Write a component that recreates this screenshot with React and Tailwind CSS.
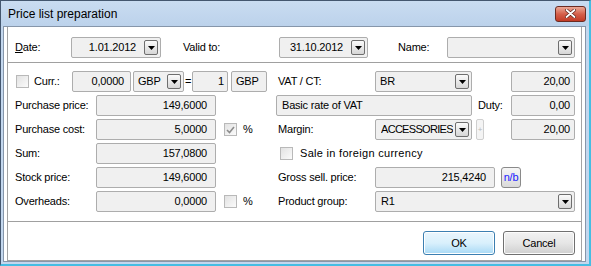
const DropBtn = ({ className = "" }) => (
  <span className={`flex h-[15px] w-[14px] shrink-0 items-center justify-center rounded-[2px] border border-[#6e6e6e] bg-linear-to-b from-[#fbfbfb] to-[#d6d6d6] ${className}`}>
    <svg width="7" height="4" viewBox="0 0 7 4">
      <path d="M0 0h7L3.5 4z" fill="#000" />
    </svg>
  </span>
);

const Field = ({ className = "", children }) => (
  <div className={`flex h-[21px] shrink-0 items-center rounded-[2px] border border-[#adadad] bg-[#f0f0f0] ${className}`}>
    {children}
  </div>
);

const Check = ({ checked, className = "" }) => (
  <span className={`flex h-[13px] w-[13px] shrink-0 items-center justify-center border border-[#b9b9b9] bg-linear-to-br from-[#e2e2e2] to-[#fbfbfb] ${className}`}>
    {checked && (
      <svg width="9" height="8" viewBox="0 0 9 8">
        <path d="M1 4l2.5 2.5L8 1" fill="none" stroke="#8c8c8c" strokeWidth="1.6" />
      </svg>
    )}
  </span>
);

const Row = ({ children }) => (
  <div className="flex h-[21px] items-center pl-[7px]">{children}</div>
);

const Left = ({ label, value, check, checked }) => (
  <div className="flex w-[263px] shrink-0 items-center">
    <span className="w-[81px]">{label}</span>
    <Field className="w-[120px] justify-end pr-[8px]">{value}</Field>
    {check && (
      <>
        <Check checked={checked} className="ml-[8px]" />
        <span className="ml-[6px]">%</span>
      </>
    )}
  </div>
);

export default function App() {
  return (
    <div className="flex h-[266px] w-[591px] flex-col border-l border-t border-[#44576f] border-r-2 border-b-2 border-r-[#45bde3] border-b-[#45bde3] bg-[#c3d7ee] font-['Liberation_Sans',Arial,sans-serif] text-[11px] leading-none tracking-[-0.2px] text-black">
      {/* title bar */}
      <div className="flex h-[25px] shrink-0 items-center bg-linear-to-b from-[#c9dcf1] to-[#bcd2eb] pl-[7px] pr-[3px]">
        <span className="text-[12px] tracking-normal">Price list preparation</span>
        <span className="ml-auto flex h-[16px] w-[31px] items-center justify-center rounded-[3px] border border-[#6b2b22] bg-linear-to-b from-[#eaa897] via-[#d5604b] to-[#c23a25]">
          <svg width="11" height="9" viewBox="0 0 11 9">
            <path d="M1.5 1l8 7M9.5 1l-8 7" stroke="#5a2018" strokeWidth="3.2" strokeLinecap="round" />
            <path d="M1.5 1l8 7M9.5 1l-8 7" stroke="#fff" strokeWidth="1.8" strokeLinecap="round" />
          </svg>
        </span>
      </div>

      {/* client */}
      <div className="ml-[2px] mr-[3px] mb-[2px] flex-1 border border-[#8696aa] bg-white">
        <div className="ml-[3px] mr-[3px] flex h-full flex-col border-l border-r border-b border-[#a3a3a3] pt-[10px]">
          {/* header row */}
          <Row>
            <span className="w-[56px]">
              <span className="underline">D</span>ate:
            </span>
            <Field className="w-[90px] justify-end pr-[2px]">
              <span>1.01.2012</span>
              <DropBtn className="ml-[8px]" />
            </Field>
            <span className="ml-[22px] w-[96px]">Valid to:</span>
            <Field className="w-[89px] justify-end pr-[2px]">
              <span>31.10.2012</span>
              <DropBtn className="ml-[8px]" />
            </Field>
            <span className="ml-[30px] w-[49px]">Name:</span>
            <Field className="w-[128px] justify-end pr-[2px]">
              <DropBtn />
            </Field>
          </Row>

          <div className="mt-[4px] h-px bg-[#a0a0a0]" />

          <div className="mt-[8px] flex flex-col gap-[3px]">
            <Row>
              <Check className="ml-[1px]" />
              <span className="ml-[5px] w-[38px]">Curr.:</span>
              <Field className="w-[59px] justify-end pr-[6px]">0,0000</Field>
              <Field className="ml-[2px] w-[51px] pl-[4px] pr-[2px]">
                <span>GBP</span>
                <DropBtn className="ml-auto" />
              </Field>
              <span className="w-[8px] text-center">=</span>
              <Field className="w-[36px] justify-end pr-[3px]">1</Field>
              <Field className="ml-[3px] w-[36px] pl-[4px]">GBP</Field>
              <span className="ml-[11px] w-[97px]">VAT / CT:</span>
              <Field className="w-[97px] pl-[4px] pr-[2px]">
                <span>BR</span>
                <DropBtn className="ml-auto" />
              </Field>
              <Field className="ml-[39px] w-[64px] justify-end pr-[4px]">20,00</Field>
            </Row>

            <Row>
              <div className="flex w-[261px] shrink-0 items-center">
                <span className="w-[81px]">Purchase price:</span>
                <Field className="w-[120px] justify-end pr-[8px]">149,6000</Field>
              </div>
              <Field className="w-[196px] pl-[5px]">Basic rate of VAT</Field>
              <span className="ml-[6px] w-[33px]">Duty:</span>
              <Field className="w-[64px] justify-end pr-[4px]">0,00</Field>
            </Row>

            <Row>
              <Left label="Purchase cost:" value="5,0000" check checked />
              <span className="w-[97px]">Margin:</span>
              <Field className="w-[97px] pl-[5px] pr-[2px]">
                <span className="overflow-hidden whitespace-nowrap tracking-[-0.7px]">ACCESSORIES</span>
                <DropBtn className="ml-auto" />
              </Field>
              <span className="ml-[4px] flex h-[21px] w-[8px] items-center justify-center rounded-[2px] border border-[#cfcfcf] bg-[#f4f4f4] text-[8px] text-[#b8b8b8]">
                +
              </span>
              <Field className="ml-[27px] w-[64px] justify-end pr-[4px]">20,00</Field>
            </Row>

            <Row>
              <Left label="Sum:" value="157,0800" />
              <Check className="ml-[2px]" />
              <span className="ml-[7px] tracking-[0.3px]">Sale in foreign currency</span>
            </Row>

            <Row>
              <Left label="Stock price:" value="149,6000" />
              <span className="w-[97px]">Gross sell. price:</span>
              <Field className="w-[120px] justify-end pr-[8px]">215,4240</Field>
              <span className="ml-[6px] flex h-[21px] w-[20px] items-center justify-center rounded-[3px] border border-[#8a8a8a] bg-linear-to-b from-[#f6f6f6] to-[#dadada] text-[#1a1aff]">
                n/b
              </span>
            </Row>

            <Row>
              <Left label="Overheads:" value="0,0000" check />
              <span className="w-[97px]">Product group:</span>
              <Field className="w-[200px] pl-[5px] pr-[2px]">
                <span>R1</span>
                <DropBtn className="ml-auto" />
              </Field>
            </Row>
          </div>

          <div className="mt-[9px] h-px bg-[#a0a0a0]" />

          <div className="mt-[9px] flex justify-end gap-[8px] pr-[6px]">
            <button className="flex h-[24px] w-[72px] items-center justify-center rounded-[3px] border border-[#3c7fb1] bg-linear-to-b from-[#eaf6fd] via-[#d9f0fc] to-[#a7d9f5] shadow-[inset_0_0_0_1px_#ffffff]">
              OK
            </button>
            <button className="flex h-[24px] w-[72px] items-center justify-center rounded-[3px] border border-[#707070] bg-linear-to-b from-[#f2f2f2] via-[#e6e6e6] to-[#cfcfcf] shadow-[inset_0_0_0_1px_#fcfcfc]">
              Cancel
            </button>
          </div>
        </div>
      </div>
    </div>
  );
}
